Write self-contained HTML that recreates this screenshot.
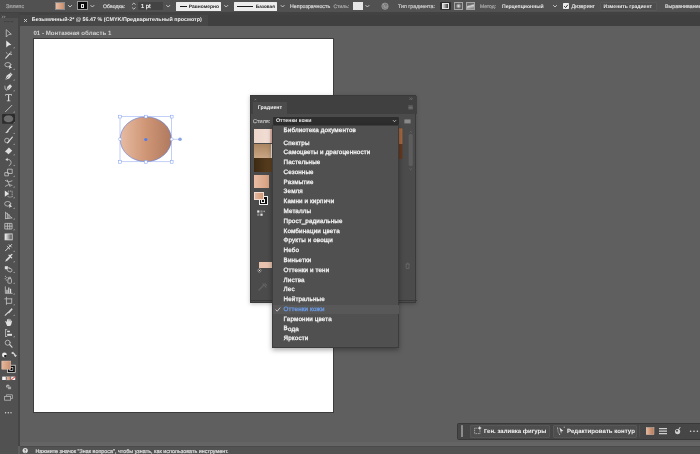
<!DOCTYPE html>
<html><head><meta charset="utf-8">
<style>
*{margin:0;padding:0;box-sizing:border-box}
html,body{width:700px;height:454px;overflow:hidden;background:#5f5f5f;font-family:"Liberation Sans",sans-serif}
#root{will-change:transform;position:absolute;left:0;top:0;width:700px;height:454px;overflow:hidden;background:#5f5f5f}
.a{position:absolute}
.t{text-rendering:geometricPrecision;transform-origin:0 0;left:0;top:0;position:absolute;white-space:nowrap;color:#e4e4e4;font-weight:bold;line-height:1}
.n{font-weight:normal;-webkit-text-stroke:2.2px currentColor}
#ctl{left:0;top:0;width:700px;height:12.2px;background:#515151}
#ctlsep{left:0;top:12.2px;width:700px;height:2.6px;background:#424242}
#tabbar{left:18px;top:14.6px;width:682px;height:11.8px;background:#404040}
#tab{left:20px;top:14.8px;width:188px;height:11.6px;background:#474747}
#tools{left:0;top:14.4px;width:17.8px;height:440px;background:#515151}
#toolhd{left:0;top:12.6px;width:17.8px;height:5.8px;background:#464646}
#toolsep{left:17.8px;top:14.4px;width:2.2px;height:432px;background:#454545}
#sband{left:20px;top:442px;width:680px;height:4px;background:#646464}
#status{left:20px;top:445.8px;width:680px;height:9px;background:#525252;border-top:1px solid #4a4a4a}
#art{left:33.4px;top:37.5px;width:300.5px;height:375.5px;background:#fff;border:0.5px solid #3c3c3c}
#panel{left:250px;top:95px;width:165.8px;height:208px;background:#4b4b4b;border:0.6px solid #3a3a3a;box-shadow:0 1px 4px rgba(0,0,0,.25)}
#phead{left:0;top:0;width:166px;height:17.6px;background:#404040}
#ptab{left:2px;top:6px;width:34.4px;height:12px;background:#4b4b4b}
#field{left:272.6px;top:117px;width:126px;height:7.6px;background:#2e2e2e;border-radius:1px}
#list{left:272.4px;top:124.6px;width:126.2px;height:223.2px;background:#505050;border:0.6px solid #3c3c3c;box-shadow:0 2px 5px rgba(0,0,0,.35)}
#list .t{font-size:63px;letter-spacing:1.1px;color:#f2f2f2;font-weight:normal;-webkit-text-stroke:3px currentColor;}
#hl{left:0;top:179px;width:126px;height:9.8px;background:#585858}
#task{left:457.4px;top:422.8px;width:250px;height:17px;background:#464646;border:0.6px solid #393939;border-radius:1.5px}
.btn{background:#4e4e4e;border:0.5px solid #575757;border-radius:1px}
.wb{background:#ececec;border-radius:0.6px}
.cv{stroke:#d0d0d0;stroke-width:0.9;fill:none;stroke-linecap:round;stroke-linejoin:round}
</style></head><body><div id="root">
<div class="a" id="ctl"></div>
<div class="a" id="ctlsep"></div>
<div class="a" id="tabbar"></div>
<div class="a" id="tab"></div>
<div class="a" id="tools"></div>
<div class="a" id="toolhd"></div>
<div class="a" id="toolsep"></div>
<div class="a" id="art"></div>
<div class="a" id="sband"></div>
<div class="a" id="status"></div>

<!-- control bar content -->
<div class="t n" style="transform:translate(5.8px,3.5px) scale(.1) rotate(.03deg);font-size:53px;color:#a8a8a8">Эллипс</div>
<div class="a" style="left:55.2px;top:1.6px;width:10px;height:8.6px;background:linear-gradient(90deg,#e8bba2,#c88e6e);border:0.5px solid #8a8a8a"></div>
<div class="a" style="left:77.2px;top:1.3px;width:10.4px;height:9.2px;background:#0a0a0a;border:0.6px solid #9a9a9a"></div>
<div class="a" style="left:80.6px;top:4.2px;width:3.6px;height:3.4px;background:#e8e8e8"></div>
<div class="a" style="left:81.6px;top:5.2px;width:1.6px;height:1.4px;background:#222"></div>
<div class="t n" style="transform:translate(103px,3.5px) scale(.1) rotate(.03deg);font-size:51.5px;color:#d6d6d6">Обводка:</div>
<div class="a" style="left:138px;top:2px;width:25.4px;height:8.2px;background:#434343;border-radius:1px"></div>
<div class="t n" style="transform:translate(141px,3.3px) scale(.1) rotate(.03deg);font-size:58px;color:#f0f0f0">1 pt</div>
<div class="a wb" style="left:176.4px;top:2px;width:45px;height:8.5px"></div>
<div class="a" style="left:179.6px;top:5.6px;width:7.4px;height:1px;background:#1a1a1a"></div>
<div class="t" style="transform:translate(188.8px,3.7px) scale(.1) rotate(.03deg);font-size:49.3px;color:#1e1e1e">Равномерно</div>
<div class="a wb" style="left:234px;top:2px;width:43px;height:8.5px"></div>
<div class="a" style="left:237px;top:5.6px;width:16px;height:1.2px;background:#1a1a1a"></div>
<div class="t" style="transform:translate(255.8px,3.7px) scale(.1) rotate(.03deg);font-size:46.5px;color:#1e1e1e">Базовая</div>
<div class="t n" style="transform:translate(290px,3.5px) scale(.1) rotate(.03deg);font-size:53px;color:#d6d6d6">Непрозрачность</div>
<div class="t n" style="transform:translate(333.6px,3.5px) scale(.1) rotate(.03deg);font-size:50px;color:#a8a8a8">Стиль:</div>
<div class="a" style="left:353.4px;top:2px;width:9.6px;height:8.4px;background:#e6e6e6"></div>
<div class="t n" style="transform:translate(398px,3.5px) scale(.1) rotate(.03deg);font-size:53px;color:#c8c8c8">Тип градиента:</div>
<div class="a" style="left:440px;top:1.6px;width:10.6px;height:8.8px;background:#2e2e2e;border-radius:1px"></div>
<div class="a" style="left:442px;top:2.8px;width:6.8px;height:6.4px;background:linear-gradient(90deg,#d8d8d8,#3a3a3a);border:0.6px solid #e0e0e0"></div>
<div class="a" style="left:453.8px;top:1.9px;width:9.4px;height:8.4px;background:radial-gradient(circle,#d8d8d8 8%,#5c5c5c 60%);border:0.7px solid #a4a4a4"></div>
<div class="a" style="left:465.8px;top:1.9px;width:9.2px;height:8.4px;background:linear-gradient(165deg,#6a6a6a 30%,#d4d4d4 50%,#8c8c8c 85%);border:0.7px solid #a4a4a4"></div>
<div class="t n" style="transform:translate(480px,3.5px) scale(.1) rotate(.03deg);font-size:50px;color:#a8a8a8">Метод:</div>
<div class="t" style="transform:translate(502px,3.6px) scale(.1) rotate(.03deg);font-size:51px;color:#ececec">Перцепционный</div>
<div class="a" style="left:563px;top:3.4px;width:5.8px;height:5.6px;background:#ececec;border-radius:0.8px"></div>
<div class="t n" style="transform:translate(571.4px,3.5px) scale(.1) rotate(.03deg);font-size:54.5px;color:#d6d6d6">Дизеринг</div>
<div class="a btn" style="left:600px;top:1.6px;width:57px;height:9.2px"></div>
<div class="t" style="transform:translate(603.6px,3.7px) scale(.1) rotate(.03deg);font-size:50.5px;color:#ececec">Изменить градиент</div>
<div class="t n" style="transform:translate(665px,3.5px) scale(.1) rotate(.03deg);font-size:53px;color:#d6d6d6">Выравнивание</div>
<svg class="a" style="left:0;top:0" width="700" height="13" viewBox="0 0 700 13">
<g class="cv">
<path d="M68.4,5.4 l1.6,1.6 l1.6,-1.6"/><path d="M90.8,5.4 l1.6,1.6 l1.6,-1.6"/>
<path d="M132.4,4.4 l1.4,-1.4 l1.4,1.4 M132.4,7.8 l1.4,1.4 l1.4,-1.4"/>
<path d="M166.6,5.4 l1.6,1.6 l1.6,-1.6"/><path d="M224.6,5.4 l1.6,1.6 l1.6,-1.6"/><path d="M281,5.4 l1.6,1.6 l1.6,-1.6"/>
<path d="M365.8,5.4 l1.6,1.6 l1.6,-1.6"/><path d="M553.4,5.4 l1.6,1.6 l1.6,-1.6"/>
</g>
<circle cx="385" cy="6.2" r="3.2" fill="#7c7c7c" stroke="#a8a8a8" stroke-width="0.6"/><path d="M383,4 q2,1 1,3 q2,1 3.6,-0.6" stroke="#b8b8b8" stroke-width="0.6" fill="none"/>
<path d="M564.2,6.2 l1.4,1.4 l2.2,-2.8" stroke="#2a2a2a" stroke-width="1" fill="none"/>
</svg>

<!-- tab title / artboard label -->
<svg class="a" style="left:22px;top:17px" width="8" height="8" viewBox="0 0 8 8"><path d="M2,2 L5,5 M5,2 L2,5" stroke="#dadada" stroke-width="0.8"/></svg>
<div class="t" style="transform:translate(31.8px,16.9px) scale(.1) rotate(.03deg);font-size:53.8px;color:#f0f0f0">Безымянный-2* @ 56.47 % (CMYK/Предварительный просмотр)</div>
<div class="t" style="transform:translate(33.4px,30px) scale(.1) rotate(.03deg);font-size:61.3px;color:#d0d0d0">01 - Монтажная область 1</div>

<!-- toolbar -->
<svg class="a" style="left:0;top:14px" width="18" height="10" viewBox="0 14 18 10"><path d="M2,15.8 l1,1 l-1,1 M4,15.8 l1,1 l-1,1" stroke="#c8c8c8" stroke-width="0.6" fill="none"/><path d="M4,21.6 H13.6" stroke="#3c3c3c" stroke-width="1" stroke-dasharray="0.8 0.6"/></svg>
<svg class="a" style="left:0;top:0" width="20" height="454" viewBox="0 0 20 454">
<defs><linearGradient id="tg" x1="0" x2="1"><stop offset="0" stop-color="#f4f4f4"/><stop offset="1" stop-color="#4a4a4a"/></linearGradient>
<linearGradient id="sk2" x1="0" x2="1"><stop offset="0" stop-color="#e6b79c"/><stop offset="1" stop-color="#c98f70"/></linearGradient></defs>
<g transform="translate(8.6,33.5) scale(0.9)"><path d="M-2.3,-4 L3,0.8 L0.3,1 L-2.3,3.6 Z" stroke="#bebebe" stroke-width="0.95" fill="none" stroke-linecap="round" stroke-linejoin="round"/>
</g>
<g transform="translate(8.6,44.2) scale(0.9)"><path d="M-2.6,-4.2 L3.2,0.8 L0.3,1.2 L-2.6,3.8 Z" fill="#e6e6e6"/>
<path d="M6.6,4.6 v-1.4 l-1.4,1.4 z" fill="#cfcfcf"/>
</g>
<g transform="translate(8.6,54.9) scale(0.9)"><path d="M-3.2,3.6 L1.6,-1.6" stroke="#d8d8d8" stroke-width="1.3" stroke-linecap="round"/><path d="M-2.6,-2.6 l1.2,1.2 M2.6,-3.4 l0,1.4 M3.4,-0.4 l-1.2,0" stroke="#bebebe" stroke-width="0.95" fill="none" stroke-linecap="round" stroke-linejoin="round"/>
</g>
<g transform="translate(8.6,65.6) scale(0.9)"><ellipse cx="-0.8" cy="-1" rx="3.4" ry="2.4" stroke="#bebebe" stroke-width="0.95" fill="none" stroke-linecap="round" stroke-linejoin="round"/><path d="M0.8,-0.6 L3.8,2.6 L2,2.6 L0.8,4 Z" fill="#e0e0e0"/>
<path d="M6.6,4.6 v-1.4 l-1.4,1.4 z" fill="#cfcfcf"/>
</g>
<g transform="translate(8.6,76.3) scale(0.9)"><path d="M-3.6,3.8 L-2.2,-0.6 L1,-3.2 L3.4,-0.8 L0.8,2.4 Z" fill="#dcdcdc"/><path d="M-3.4,3.6 L-0.2,0.4" stroke="#4a4a4a" stroke-width="0.7"/><path d="M1.6,-3.8 L4,-1.4" stroke="#d8d8d8" stroke-width="1.2"/>
<path d="M6.6,4.6 v-1.4 l-1.4,1.4 z" fill="#cfcfcf"/>
</g>
<g transform="translate(8.6,87.0) scale(0.9)"><path d="M-2.6,3.8 L-1.4,-0.4 L1.6,-3 L3.8,-0.8 L1.2,2.4 Z" fill="#dcdcdc"/><path d="M-2.4,3.6 L0.6,0.6" stroke="#4a4a4a" stroke-width="0.7"/><path d="M-4.2,-1 Q-4.6,3.2 -2.6,3.8" stroke="#bebebe" stroke-width="0.95" fill="none" stroke-linecap="round" stroke-linejoin="round"/>
<path d="M6.6,4.6 v-1.4 l-1.4,1.4 z" fill="#cfcfcf"/>
</g>
<g transform="translate(8.6,97.7) scale(0.9)"><path transform="scale(0.92)" d="M-4,-4.2 H4 V-2.2 H3.4 V-3.2 H0.7 V3.4 H2.2 V4.2 H-2.2 V3.4 H-0.7 V-3.2 H-3.4 V-2.2 H-4 Z" fill="#dadada"/>
</g>
<g transform="translate(8.6,108.4) scale(0.9)"><path d="M-3.4,3.6 L3.6,-3.4" stroke="#d8d8d8" stroke-width="0.9" stroke-linecap="round"/>
<path d="M6.6,4.6 v-1.4 l-1.4,1.4 z" fill="#cfcfcf"/>
</g>
<g transform="translate(8.6,119.1) scale(0.9)"><g transform="scale(1.111)"><rect x="-6.5" y="-5.2" width="12.9" height="9.8" rx="0.8" fill="#2d2d2d"/><ellipse cx="-0.1" cy="-0.3" rx="4.3" ry="3.1" fill="#6c6c6c" stroke="#858585" stroke-width="0.5"/></g>
<path d="M6.6,4.6 v-1.4 l-1.4,1.4 z" fill="#cfcfcf"/>
</g>
<g transform="translate(8.6,129.8) scale(0.9)"><path d="M3.8,-4 L-0.6,0.6" stroke="#dedede" stroke-width="1.3" stroke-linecap="round"/><path d="M-1,0.4 L0.2,1.6 Q-1.4,4 -3.8,3.6 Q-2.4,2.4 -1,0.4 Z" fill="#dedede"/>
<path d="M6.6,4.6 v-1.4 l-1.4,1.4 z" fill="#cfcfcf"/>
</g>
<g transform="translate(8.6,140.5) scale(0.9)"><circle cx="-1.8" cy="0" r="2.6" stroke="#bebebe" stroke-width="0.95" fill="none" stroke-linecap="round" stroke-linejoin="round"/><path d="M4.2,-3.8 L-1.2,2.6" stroke="#dedede" stroke-width="1.2" stroke-linecap="round"/>
<path d="M6.6,4.6 v-1.4 l-1.4,1.4 z" fill="#cfcfcf"/>
</g>
<g transform="translate(8.6,151.2) scale(0.9)"><path d="M0.4,-4 L4,-0.6 L-0.4,3.8 L-4,0.4 Z" fill="#dedede"/><path d="M-3,1.4 L0.6,4.6" stroke="#4a4a4a" stroke-width="0.8"/>
<path d="M6.6,4.6 v-1.4 l-1.4,1.4 z" fill="#cfcfcf"/>
</g>
<g transform="translate(8.6,161.9) scale(0.9)"><path d="M-2.2,-2.6 Q2.6,-3.6 2.8,0.8 Q2.8,3.4 0.6,4.2" stroke="#bebebe" stroke-width="0.95" fill="none" stroke-linecap="round" stroke-linejoin="round"/><path d="M-1.2,-4.6 L-3.6,-2.4 L-0.8,-1 Z" fill="#d8d8d8"/>
<path d="M6.6,4.6 v-1.4 l-1.4,1.4 z" fill="#cfcfcf"/>
</g>
<g transform="translate(8.6,172.6) scale(0.9)"><rect x="-0.8" y="-3.8" width="4.8" height="4.8" stroke="#bebebe" stroke-width="0.95" fill="none" stroke-linecap="round" stroke-linejoin="round"/><rect x="-3.8" y="0" width="3.6" height="3.6" stroke="#bebebe" stroke-width="0.95" fill="none" stroke-linecap="round" stroke-linejoin="round"/>
<path d="M6.6,4.6 v-1.4 l-1.4,1.4 z" fill="#cfcfcf"/>
</g>
<g transform="translate(8.6,183.3) scale(0.9)"><path d="M-3.6,-3 Q0,0 3.8,-2.6 M-3.6,3.2 Q0,0 3.8,2.2 M-1.4,-3.6 L1.6,3.6" stroke="#bebebe" stroke-width="0.95" fill="none" stroke-linecap="round" stroke-linejoin="round"/>
<path d="M6.6,4.6 v-1.4 l-1.4,1.4 z" fill="#cfcfcf"/>
</g>
<g transform="translate(8.6,194.0) scale(0.9)"><path d="M-4.2,-3.8 L0.4,-0.2 L-4.2,3 Z" fill="#e4e4e4"/><rect x="-0.6" y="-3.2" width="4.6" height="6.6" stroke="#d4d4d4" stroke-width="0.8" fill="none" stroke-dasharray="1.2 0.8"/>
<path d="M6.6,4.6 v-1.4 l-1.4,1.4 z" fill="#cfcfcf"/>
</g>
<g transform="translate(8.6,204.7) scale(0.9)"><ellipse cx="-1" cy="-1" rx="3.4" ry="2.6" stroke="#bebebe" stroke-width="0.95" fill="none" stroke-linecap="round" stroke-linejoin="round"/><path d="M0.6,-1 L4,2.2 L2.2,2.4 L1,4 Z" fill="#e0e0e0"/>
<path d="M6.6,4.6 v-1.4 l-1.4,1.4 z" fill="#cfcfcf"/>
</g>
<g transform="translate(8.6,215.4) scale(0.9)"><path d="M-3.4,-3.4 V3.6 M-1.4,-2.4 V3.4 M0.4,-1 V3.2 M-3.4,-3.4 L3.6,2.8 M-3.4,3.6 L3.6,2.8" stroke="#bebebe" stroke-width="0.95" fill="none" stroke-linecap="round" stroke-linejoin="round"/>
<path d="M6.6,4.6 v-1.4 l-1.4,1.4 z" fill="#cfcfcf"/>
</g>
<g transform="translate(8.6,226.1) scale(0.9)"><rect x="-3.8" y="-3" width="7.6" height="6.2" stroke="#bebebe" stroke-width="0.95" fill="none" stroke-linecap="round" stroke-linejoin="round"/><path d="M-1.3,-3 V3.2 M1.3,-3 V3.2 M-3.8,0.1 H3.8" stroke="#bebebe" stroke-width="0.95" fill="none" stroke-linecap="round" stroke-linejoin="round"/>
<path d="M6.6,4.6 v-1.4 l-1.4,1.4 z" fill="#cfcfcf"/>
</g>
<g transform="translate(8.6,236.8) scale(0.9)"><rect x="-4" y="-3.2" width="8" height="6.6" fill="url(#tg)" stroke="#e0e0e0" stroke-width="0.9"/>
</g>
<g transform="translate(8.6,247.5) scale(0.9)"><path d="M-3.4,3.6 L3.4,-3.4" stroke="#d8d8d8" stroke-width="1.1" stroke-linecap="round"/><path d="M-1.6,-1.2 L1.2,1.6 M0.6,-3 L3,-0.6" stroke="#d8d8d8" stroke-width="1.1" stroke-linecap="round"/>
<path d="M6.6,4.6 v-1.4 l-1.4,1.4 z" fill="#cfcfcf"/>
</g>
<g transform="translate(8.6,258.2) scale(0.9)"><path d="M-3.8,4 L-2.8,1.4 L1,-2.4 L2.4,-1 L-1.4,2.8 Z" fill="#d8d8d8"/><path d="M0.4,-3.4 L3.4,-0.4 M1.6,-2.4 L3.6,-4.2" stroke="#e0e0e0" stroke-width="1.4" stroke-linecap="round"/>
<path d="M6.6,4.6 v-1.4 l-1.4,1.4 z" fill="#cfcfcf"/>
</g>
<g transform="translate(8.6,268.9) scale(0.9)"><rect x="-4.2" y="-3" width="3.4" height="3.4" fill="#e0e0e0"/><rect x="-1.4" y="-1.2" width="5.6" height="3.6" rx="1.6" transform="rotate(25)" stroke="#bebebe" stroke-width="0.95" fill="none" stroke-linecap="round" stroke-linejoin="round"/>
<path d="M6.6,4.6 v-1.4 l-1.4,1.4 z" fill="#cfcfcf"/>
</g>
<g transform="translate(8.6,279.6) scale(0.9)"><rect x="-0.8" y="-1" width="4" height="5" rx="0.8" stroke="#bebebe" stroke-width="0.95" fill="none" stroke-linecap="round" stroke-linejoin="round"/><path d="M0.2,-1 V-2.6 H2.2 V-1" stroke="#bebebe" stroke-width="0.95" fill="none" stroke-linecap="round" stroke-linejoin="round"/><path d="M-3.6,-3.6 h0.1 M-2,-2.2 h0.1 M-3.8,-1 h0.1 M-2.6,0.6 h0.1" stroke="#d8d8d8" stroke-width="1" stroke-linecap="round"/>
<path d="M6.6,4.6 v-1.4 l-1.4,1.4 z" fill="#cfcfcf"/>
</g>
<g transform="translate(8.6,290.3) scale(0.9)"><path d="M-3.6,-4 V3.4 H4" stroke="#bebebe" stroke-width="0.95" fill="none" stroke-linecap="round" stroke-linejoin="round"/><path d="M-1.8,3 V-0.6 M0.2,3 V-3.2 M2.2,3 V-1.8" stroke="#dcdcdc" stroke-width="1.3"/>
<path d="M6.6,4.6 v-1.4 l-1.4,1.4 z" fill="#cfcfcf"/>
</g>
<g transform="translate(8.6,301.0) scale(0.9)"><path d="M-2.4,-4.2 V3.8 M-4.2,-2.4 H3.6 M-2.4,2.6 H3.4 V-2.4" stroke="#bebebe" stroke-width="0.95" fill="none" stroke-linecap="round" stroke-linejoin="round"/>
<path d="M6.6,4.6 v-1.4 l-1.4,1.4 z" fill="#cfcfcf"/>
</g>
<g transform="translate(8.6,311.7) scale(0.9)"><path d="M3.6,-4 L-1,0.6 L0.4,2 L4.4,-2.4 Z" fill="#d8d8d8"/><path d="M-0.8,1 L-3.8,4" stroke="#d8d8d8" stroke-width="1.2" stroke-linecap="round"/>
<path d="M6.6,4.6 v-1.4 l-1.4,1.4 z" fill="#cfcfcf"/>
</g>
<g transform="translate(8.6,322.4) scale(0.9)"><path d="M-3,0.6 L-3.8,-1.2 L-2.8,-1.6 L-1.8,-0.2 L-1.8,-3.4 L-0.8,-3.4 L-0.6,-0.8 L-0.2,-4 L0.8,-4 L0.8,-0.8 L1.4,-3.4 L2.4,-3.2 L2.2,-0.4 L3,-2 L3.8,-1.6 L3,2 L1.8,4 L-1.6,4 Z" fill="#e0e0e0"/>
</g>
<g transform="translate(8.6,333.1) scale(0.9)"><path d="M-3.4,-3.8 V3.8 M-3.4,-3.8 H-2 M-3.4,3.8 H-2" stroke="#bebebe" stroke-width="0.95" fill="none" stroke-linecap="round" stroke-linejoin="round"/><rect x="-1.6" y="-2.6" width="3" height="1.6" fill="#e0e0e0"/><rect x="-1.6" y="0.8" width="5.4" height="2.2" fill="#e0e0e0"/>
<path d="M6.6,4.6 v-1.4 l-1.4,1.4 z" fill="#cfcfcf"/>
</g>
<g transform="translate(8.6,343.8) scale(0.9)"><circle cx="-1" cy="-1.2" r="2.8" stroke="#bebebe" stroke-width="0.95" fill="none" stroke-linecap="round" stroke-linejoin="round"/><path d="M1.2,1 L3.8,3.8" stroke="#d8d8d8" stroke-width="1.3" stroke-linecap="round"/>
</g>
</svg>
<svg class="a" style="left:0;top:350px" width="20" height="70" viewBox="0 350 20 70">
<circle cx="4.4" cy="355" r="2.4" fill="#ececec"/><path d="M4.4,355 L6.8,355 A2.4,2.4 0 0 1 4.4,357.4 Z" fill="#1c1c1c"/><circle cx="5.4" cy="356" r="1" fill="#1c1c1c"/>
<path d="M12.4,353 q3,0 3,3 M11.6,353 l1.6,-1 v2 z M15.4,356.8 l-1,-1.4 h2 z" stroke="#d8d8d8" stroke-width="0.7" fill="#d8d8d8"/>
<rect x="7.4" y="365.2" width="7.8" height="7.4" fill="#0c0c0c" stroke="#f0f0f0" stroke-width="0.7"/><rect x="9.7" y="367.4" width="3.2" height="3" fill="none" stroke="#f0f0f0" stroke-width="0.6"/>
<rect x="1.8" y="361" width="9" height="8.2" fill="url(#sk2)" stroke="#e8d0c2" stroke-width="0.4"/>
<rect x="2.2" y="376.6" width="3.6" height="3.4" fill="#f4f4f4"/><rect x="6.8" y="376.6" width="3.4" height="3.4" fill="url(#sk2)" stroke="#bbb" stroke-width="0.3"/><rect x="11.2" y="376.6" width="4" height="3.4" fill="#f4f4f4"/><path d="M11.2,380 L15.2,376.6" stroke="#e02020" stroke-width="1"/>
<circle cx="7.8" cy="386.2" r="1.8" fill="#b4b4b4"/><rect x="7.8" y="386.4" width="3.4" height="3" fill="#a4a4a4" stroke="#4c4c4c" stroke-width="0.4"/>
<rect x="4.6" y="396.4" width="6" height="3.8" fill="none" stroke="#b8b8b8" stroke-width="0.8"/><path d="M6.4,396.2 V394.8 H12.4 V398.6 H10.8" fill="none" stroke="#b8b8b8" stroke-width="0.8"/>
<circle cx="5.6" cy="412.8" r="0.7" fill="#d8d8d8"/><circle cx="8.3" cy="412.8" r="0.7" fill="#d8d8d8"/><circle cx="11" cy="412.8" r="0.7" fill="#d8d8d8"/>
</svg>

<!-- ellipse -->
<svg class="a" style="left:100px;top:100px" width="100" height="80" viewBox="100 100 100 80">
<defs><linearGradient id="sk" x1="0" x2="1" y1="0" y2="0"><stop offset="0" stop-color="#e6bba3"/><stop offset="0.5" stop-color="#cf9675"/><stop offset="1" stop-color="#b07a60"/></linearGradient></defs>
<ellipse cx="145.8" cy="139.2" rx="25.6" ry="22.4" fill="url(#sk)" stroke="#5c78d8" stroke-width="0.6"/>
<rect x="120" y="116.6" width="51.7" height="45.2" fill="none" stroke="#86a0ee" stroke-width="0.5"/>
<g fill="#fff" stroke="#7f9cf0" stroke-width="0.5">
<rect x="118.6" y="115.2" width="2.8" height="2.8"/><rect x="144.4" y="115.2" width="2.8" height="2.8"/><rect x="170.3" y="115.2" width="2.8" height="2.8"/>
<rect x="118.6" y="160.4" width="2.8" height="2.8"/><rect x="144.4" y="160.4" width="2.8" height="2.8"/><rect x="170.3" y="160.4" width="2.8" height="2.8"/>
<circle cx="120" cy="139.2" r="1.5"/><circle cx="171.7" cy="139.2" r="1.5"/>
</g>
<circle cx="145.8" cy="139.5" r="1.6" fill="#4d7df0"/>
<line x1="173" y1="139.3" x2="179" y2="139.3" stroke="#9ab0ea" stroke-width="0.6"/>
<circle cx="180" cy="139.3" r="1.8" fill="#8aa4e6"/>
</svg>

<!-- gradient panel -->
<div class="a" id="panel">
 <div class="a" id="phead"></div>
 <div class="a" id="ptab"></div>
 <svg class="a" style="left:2px;top:1px" width="6" height="6" viewBox="0 0 6 6"><path d="M1.6,1.8 l1.6,1.6 M3.2,1.8 l-1.6,1.6" stroke="#8a8a8a" stroke-width="0.5"/></svg>
 <div class="t" style="transform:translate(6.8px,8.1px) scale(.1) rotate(.03deg);font-size:53px;color:#f2f2f2">Градиент</div>
 <div class="t n" style="transform:translate(2.1px,22.4px) scale(.1) rotate(.03deg);font-size:55px;color:#bcbcbc">Стиля:</div>
 <!-- swatches -->
 <div class="a" style="left:3.4px;top:33.1px;width:25px;height:14.4px;background:linear-gradient(90deg,#eed6cb,#f3e3db)"></div><div class="a" style="left:19.4px;top:33.1px;width:2.4px;height:14.4px;background:#e5b8a8"></div>
 <div class="a" style="left:3.4px;top:47.5px;width:25px;height:14.6px;background:linear-gradient(180deg,#ac8662,#c9a684)"></div><div class="a" style="left:19.6px;top:47.5px;width:2.2px;height:14.6px;background:#f1e9e2"></div>
 <div class="a" style="left:3.4px;top:62.1px;width:25px;height:14px;background:linear-gradient(90deg,#3c2912,#6a4a26)"></div>
 <div class="a" style="left:3.2px;top:79.4px;width:14.8px;height:13px;background:linear-gradient(90deg,#e9bda4,#d59f80)"></div>
 <div class="a" style="left:8px;top:100.4px;width:8.6px;height:8.6px;background:#0e0e0e;border:0.7px solid #f0f0f0"></div>
 <div class="a" style="left:10.3px;top:102.7px;width:4px;height:4px;border:0.6px solid #f0f0f0"></div>
 <div class="a" style="left:3.2px;top:95.9px;width:9.6px;height:8.4px;background:linear-gradient(90deg,#e6b79c,#cf9877);border:0.3px solid #f0dcd0"></div>
 <svg class="a" style="left:4.6px;top:112.6px" width="10" height="10" viewBox="0 0 10 10"><g fill="#e4e4e4"><rect x="1.2" y="1.4" width="2.2" height="2.2"/><rect x="4.4" y="1.4" width="2.2" height="2.2" fill="#8a8a8a"/><rect x="1.2" y="4.6" width="2.2" height="2.2" fill="#8a8a8a"/><rect x="4.4" y="4.6" width="2.2" height="2.2"/></g><path d="M7.4,2.4 h1.6 M8.2,1.6 v1.6" stroke="#d0d0d0" stroke-width="0.5"/></svg>
 <!-- slider -->
 <div class="a" style="left:7.8px;top:165.6px;width:20px;height:6.8px;background:#e7c3af"></div>
 <div class="a" style="left:6.8px;top:172.8px;width:3.6px;height:3.6px;border-radius:50%;background:#f6e6dc;border:0.8px solid #303030;box-shadow:0 0 0 0.4px #b0b0b0"></div>
 <svg class="a" style="left:6px;top:186px" width="12" height="10" viewBox="0 0 12 10"><path d="M2,8 L7,3 M6,2 l3,3 M8,1.6 l1.6,1.6" stroke="#626262" stroke-width="1.2" stroke-linecap="round"/></svg>
 <!-- right side -->
 <svg class="a" style="left:146px;top:0" width="20" height="90" viewBox="0 0 20 90">
  <path d="M12.6,1.8 l0.9,0.9 l-0.9,0.9 M14.4,1.8 l0.9,0.9 l-0.9,0.9" stroke="#a8a8a8" stroke-width="0.5" fill="none"/>
  <path d="M11.4,10 h4.4 M11.4,11.4 h4.4 M11.4,12.8 h4.4" stroke="#808080" stroke-width="0.8"/>
  <rect x="7.4" y="23.4" width="6.2" height="4" fill="#8a8a8a"/>
  <rect x="2" y="32.4" width="3.4" height="15.6" fill="#a8683f"/><rect x="2" y="48" width="3.4" height="15" fill="#68391f"/>
  <rect x="11.6" y="38" width="4.2" height="32" rx="1.6" fill="#5d5d5d"/>
  <path d="M12.6,36.4 l1.1,-1.1 l1.1,1.1 M12.6,72.6 l1.1,1.1 l1.1,-1.1" stroke="#7a7a7a" stroke-width="0.5" fill="none"/>
 </svg>
 <svg class="a" style="left:152px;top:165px" width="10" height="10" viewBox="0 0 10 10"><path d="M2.6,3 h4 M3.2,3 v4.4 h2.8 v-4.4 M3.8,2.2 h1.6" stroke="#707070" stroke-width="0.7" fill="none"/></svg>
 <div class="a" style="left:0;top:203.6px;width:166px;height:1.2px;background:#3a3a3a"></div>
</div>
<div class="a" id="field"></div>
<div class="t" style="transform:translate(276px,117.7px) scale(.1) rotate(.03deg);font-size:53px;color:#ececec">Оттенки кожи</div>
<svg class="a" style="left:390px;top:117px" width="10" height="8" viewBox="0 0 10 8"><path d="M3,3.2 l1.5,1.5 l1.5,-1.5" stroke="#e0e0e0" stroke-width="0.8" fill="none"/></svg>

<div class="a" id="list">
 <div class="a" id="hl"></div>
 <svg class="a" style="left:0.2px;top:179.4px" width="9" height="9" viewBox="0 0 9 9"><path d="M1.6,4.6 l1.6,1.6 l3,-3.6" stroke="#dcdcdc" stroke-width="0.8" fill="none"/></svg>
 <div class="t" style="transform:translate(10.6px,0.9px) scale(.1) rotate(.03deg)">Библиотека документов</div>
 <div class="t" style="transform:translate(10.6px,13.3px) scale(.1) rotate(.03deg)">Спектры</div>
 <div class="t" style="transform:translate(10.6px,22.9px) scale(.1) rotate(.03deg)">Самоцветы и драгоценности</div>
 <div class="t" style="transform:translate(10.6px,32.6px) scale(.1) rotate(.03deg)">Пастельные</div>
 <div class="t" style="transform:translate(10.6px,42.5px) scale(.1) rotate(.03deg)">Сезонные</div>
 <div class="t" style="transform:translate(10.6px,52.3px) scale(.1) rotate(.03deg)">Размытие</div>
 <div class="t" style="transform:translate(10.6px,62px) scale(.1) rotate(.03deg)">Земля</div>
 <div class="t" style="transform:translate(10.6px,71.8px) scale(.1) rotate(.03deg)">Камни и кирпичи</div>
 <div class="t" style="transform:translate(10.6px,81.7px) scale(.1) rotate(.03deg)">Металлы</div>
 <div class="t" style="transform:translate(10.6px,91.6px) scale(.1) rotate(.03deg)">Прост_радиальные</div>
 <div class="t" style="transform:translate(10.6px,101.5px) scale(.1) rotate(.03deg)">Комбинации цвета</div>
 <div class="t" style="transform:translate(10.6px,111.1px) scale(.1) rotate(.03deg)">Фрукты и овощи</div>
 <div class="t" style="transform:translate(10.6px,121px) scale(.1) rotate(.03deg)">Небо</div>
 <div class="t" style="transform:translate(10.6px,130.9px) scale(.1) rotate(.03deg)">Виньетки</div>
 <div class="t" style="transform:translate(10.6px,140.8px) scale(.1) rotate(.03deg)">Оттенки и тени</div>
 <div class="t" style="transform:translate(10.6px,150.4px) scale(.1) rotate(.03deg)">Листва</div>
 <div class="t" style="transform:translate(10.6px,160px) scale(.1) rotate(.03deg)">Лес</div>
 <div class="t" style="transform:translate(10.6px,169.9px) scale(.1) rotate(.03deg)">Нейтральные</div>
 <div class="t" style="transform:translate(10.6px,179.8px) scale(.1) rotate(.03deg);color:#6a9ae6">Оттенки кожи</div>
 <div class="t" style="transform:translate(10.6px,189.7px) scale(.1) rotate(.03deg)">Гармонии цвета</div>
 <div class="t" style="transform:translate(10.6px,199.3px) scale(.1) rotate(.03deg)">Вода</div>
 <div class="t" style="transform:translate(10.6px,209.2px) scale(.1) rotate(.03deg)">Яркости</div>
</div>

<!-- task bar -->
<div class="a" id="task"></div>
<div class="a" style="left:461px;top:425.2px;width:1.8px;height:11.8px;background:#8c8c8c;border-radius:0.6px"></div>
<div class="a btn" style="left:469.6px;top:424.7px;width:80.6px;height:13.2px"></div>
<div class="a btn" style="left:553px;top:424.7px;width:84px;height:13.2px"></div>
<div class="t" style="transform:translate(484px,428.2px) scale(.1) rotate(.03deg);font-size:60px;color:#f4f4f4">Ген. заливка фигуры</div>
<div class="t" style="transform:translate(567px,428.2px) scale(.1) rotate(.03deg);font-size:61px;color:#f4f4f4">Редактировать контур</div>
<svg class="a" style="left:470px;top:423px" width="230" height="17" viewBox="470 423 230 17">
<rect x="474.6" y="428.2" width="5.4" height="5.4" fill="none" stroke="#d8d8d8" stroke-width="0.7" stroke-dasharray="1 0.7"/><path d="M479.8,426 l0.6,1.4 l1.4,0.6 l-1.4,0.6 l-0.6,1.4 l-0.6,-1.4 l-1.4,-0.6 l1.4,-0.6 z" fill="#f0f0f0"/>
<path d="M559.4,427.4 l4,3.6 l-2,0.2 l-0.2,2.6 z" fill="#e6e6e6"/><path d="M557.6,428 h0.1 M559.6,434.4 h0.1 M564.2,427.2 h0.1" stroke="#d8d8d8" stroke-width="1" stroke-linecap="round"/><path d="M557.6,428 Q557.6,433 559.6,434.4" stroke="#c0c0c0" stroke-width="0.5" fill="none"/>
<path d="M639.6,425.4 V437" stroke="#5a5a5a" stroke-width="0.6"/>
<rect x="646.2" y="427.6" width="7.8" height="7" fill="url(#sk)" stroke="#e8d4c8" stroke-width="0.4"/>
<path d="M659,428.6 h8 M659,431.1 h8 M659,433.6 h8" stroke="#d0d0d0" stroke-width="1.2"/>
<circle cx="677.6" cy="431.6" r="2.6" fill="#cfcfcf"/><circle cx="677" cy="430.8" r="1" fill="#464646"/><path d="M678.6,429.6 l1.4,-2.2" stroke="#d8d8d8" stroke-width="1" stroke-linecap="round"/>
<circle cx="690.6" cy="431.2" r="0.8" fill="#dcdcdc"/><circle cx="694" cy="431.2" r="0.8" fill="#dcdcdc"/><circle cx="697.4" cy="431.2" r="0.8" fill="#dcdcdc"/>
</svg>

<!-- status -->
<svg class="a" style="left:21.2px;top:446.4px" width="10" height="8" viewBox="0 0 10 8"><circle cx="4.2" cy="4.6" r="2.6" fill="#e2e2e2"/><path d="M3.4,3.8 q0.8,-1 1.6,0 q0,0.6 -0.8,1.2 M4.2,6.2 v0.1" stroke="#484848" stroke-width="0.7" fill="none" stroke-linecap="round"/></svg>
<div class="t n" style="transform:translate(35.4px,448.2px) scale(.1) rotate(.03deg);font-size:54px;color:#dcdcdc">Нажмите значок "Знак вопроса", чтобы узнать, как использовать инструмент.</div>
</div></body></html>
